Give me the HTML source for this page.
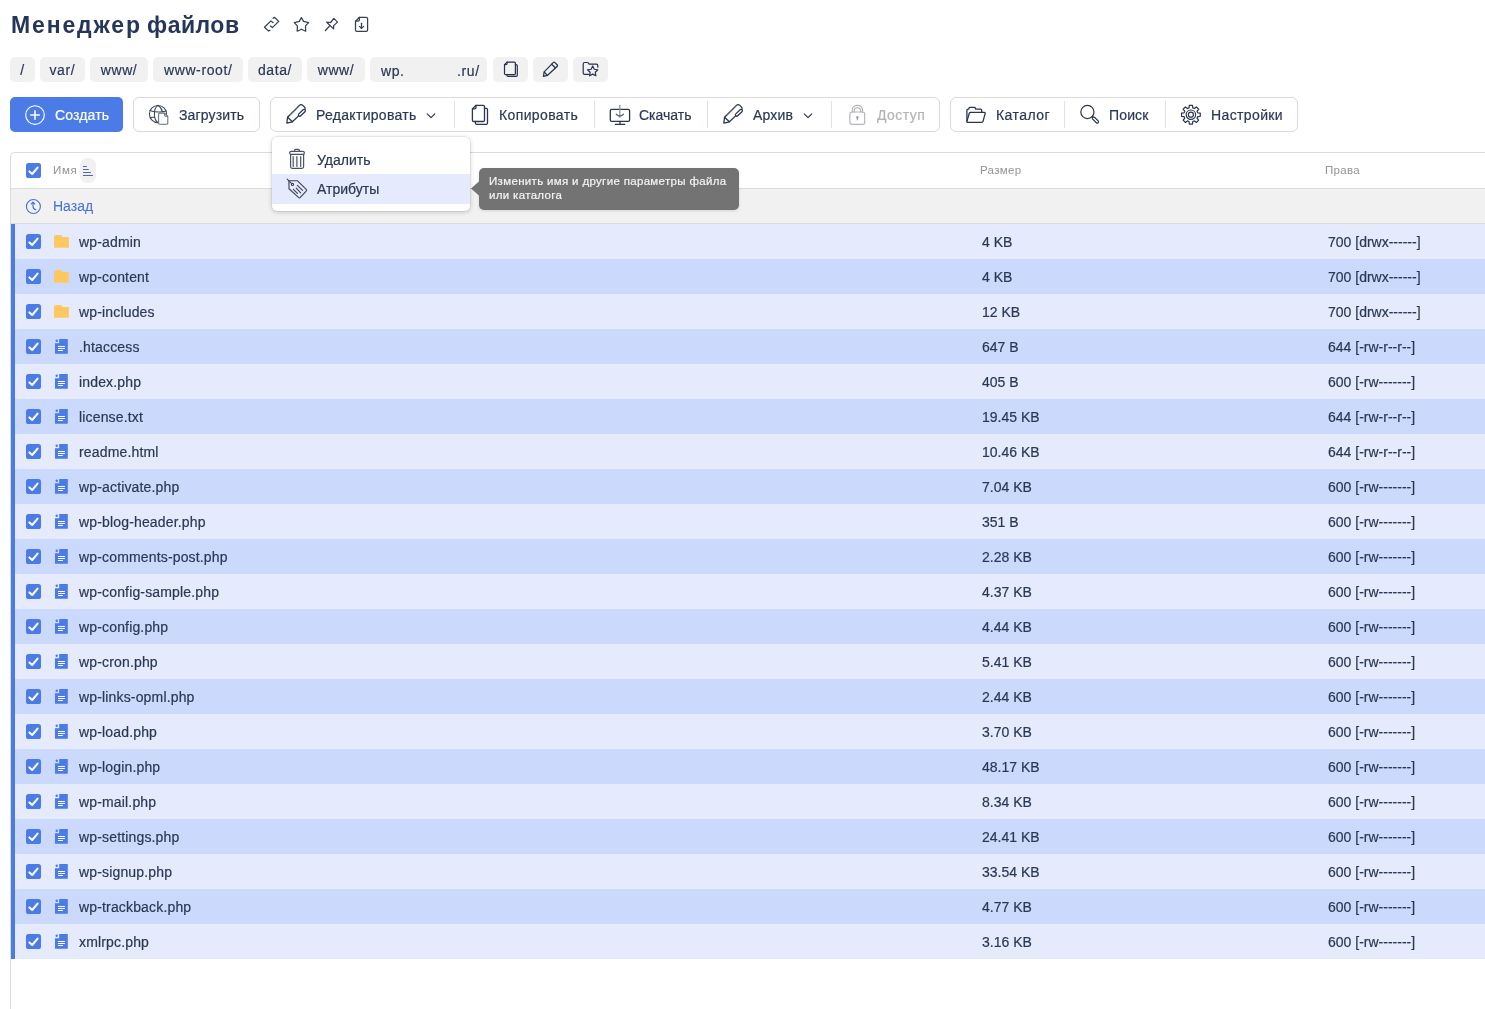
<!DOCTYPE html>
<html lang="ru"><head><meta charset="utf-8"><title>Менеджер файлов</title>
<style>
html,body{margin:0;padding:0;background:#fff;width:1485px;height:1009px;overflow:hidden;position:relative;font-family:"Liberation Sans",sans-serif;}
.t{position:absolute;white-space:nowrap;font-family:"Liberation Sans",sans-serif;will-change:transform;-webkit-text-stroke:0.2px currentColor;}
svg{overflow:visible}
</style></head><body>
<div class="t" style="left:10.7px;top:10.93px;font-size:23px;line-height:29px;color:#24365a;font-weight:700;letter-spacing:1.85px;-webkit-text-stroke:0">Менеджер</div>
<div class="t" style="left:147px;top:10.93px;font-size:23px;line-height:29px;color:#24365a;font-weight:700;letter-spacing:0.5px;-webkit-text-stroke:0">файлов</div>
<svg style="position:absolute;left:260px;top:12px;" width="24" height="24" viewBox="0 0 24 24" fill="none" stroke="#363f57" stroke-width="1.25" stroke-linecap="round" stroke-linejoin="round"><path d="M13 10.6 L10.9 8.9 L4.5 15.2 L8.6 19.1 L9.9 18.2"/><path d="M10.4 14 L12.4 15.6 L18.7 9.4 L14.4 5.3 L13.1 6.3"/></svg>
<svg style="position:absolute;left:290px;top:12px;" width="24" height="24" viewBox="0 0 24 24" fill="none" stroke="#363f57" stroke-width="1.25" stroke-linecap="round" stroke-linejoin="round"><path d="M11.4 5.6 L13.6 9.4 L18.6 10.6 L15.5 13.9 L15.7 19.2 L11.4 17.3 L7.2 19.2 L7.4 13.9 L4.3 10.6 L9.3 9.4 Z"/></svg>
<svg style="position:absolute;left:320px;top:12px;" width="24" height="24" viewBox="0 0 24 24" fill="none" stroke="#363f57" stroke-width="1.25" stroke-linecap="round" stroke-linejoin="round"><path d="M5.4 18.5 L9.6 14"/><path d="M6.7 10.2 L10.7 10.5 L13.8 6.4 L17.5 10.1 L13.7 13.6 L13.6 16.9 Z"/></svg>
<svg style="position:absolute;left:350px;top:12px;" width="24" height="24" viewBox="0 0 24 24" fill="none" stroke="#363f57" stroke-width="1.25" stroke-linecap="round" stroke-linejoin="round"><path d="M9.4 5.3 H16.2 A1.4 1.4 0 0 1 17.6 6.7 V18 A1.4 1.4 0 0 1 16.2 19.4 H6.9 A1.4 1.4 0 0 1 5.5 18 V9.2 Z"/><path d="M5.6 9.2 H8 A1.4 1.4 0 0 0 9.4 7.8 V5.4"/><path d="M11.5 11.3 V16.4"/><path d="M9.5 14.4 L11.5 16.4 L13.6 14.4"/></svg>
<div style="position:absolute;left:10px;top:57px;width:24.5px;height:25px;background:#f1f1f1;border-radius:5px"></div>
<div class="t" style="left:10px;top:57.6px;width:24.5px;height:25px;line-height:25px;text-align:center;font-size:14px;letter-spacing:0.6px;text-indent:0.6px;color:#2a3856">/</div>
<div style="position:absolute;left:40.4px;top:57px;width:44.2px;height:25px;background:#f1f1f1;border-radius:5px"></div>
<div class="t" style="left:40.4px;top:57.6px;width:44.2px;height:25px;line-height:25px;text-align:center;font-size:14px;letter-spacing:0.6px;text-indent:0.6px;color:#2a3856">var/</div>
<div style="position:absolute;left:90px;top:57px;width:57.5px;height:25px;background:#f1f1f1;border-radius:5px"></div>
<div class="t" style="left:90px;top:57.6px;width:57.5px;height:25px;line-height:25px;text-align:center;font-size:14px;letter-spacing:0.6px;text-indent:0.6px;color:#2a3856">www/</div>
<div style="position:absolute;left:153.2px;top:57px;width:89.8px;height:25px;background:#f1f1f1;border-radius:5px"></div>
<div class="t" style="left:153.2px;top:57.6px;width:89.8px;height:25px;line-height:25px;text-align:center;font-size:14px;letter-spacing:0.6px;text-indent:0.6px;color:#2a3856">www-root/</div>
<div style="position:absolute;left:248px;top:57px;width:53.5px;height:25px;background:#f1f1f1;border-radius:5px"></div>
<div class="t" style="left:248px;top:57.6px;width:53.5px;height:25px;line-height:25px;text-align:center;font-size:14px;letter-spacing:0.6px;text-indent:0.6px;color:#2a3856">data/</div>
<div style="position:absolute;left:307.2px;top:57px;width:57.4px;height:25px;background:#f1f1f1;border-radius:5px"></div>
<div class="t" style="left:307.2px;top:57.6px;width:57.4px;height:25px;line-height:25px;text-align:center;font-size:14px;letter-spacing:0.6px;text-indent:0.6px;color:#2a3856">www/</div>
<div style="position:absolute;left:370.2px;top:57px;width:117.3px;height:25px;background:#f1f1f1;border-radius:5px"></div>
<div class="t" style="left:380.5px;top:60.55px;font-size:14px;line-height:20px;color:#2a3856;font-weight:400;letter-spacing:0.6px">wp.</div>
<div class="t" style="left:456.5px;top:60.55px;font-size:14px;line-height:20px;color:#2a3856;font-weight:400;letter-spacing:0.6px">.ru/</div>
<div style="position:absolute;left:493px;top:57px;width:34.6px;height:25px;background:#f1f1f1;border-radius:5px"></div>
<div style="position:absolute;left:533.4px;top:57px;width:34.6px;height:25px;background:#f1f1f1;border-radius:5px"></div>
<div style="position:absolute;left:573.3px;top:57px;width:34.6px;height:25px;background:#f1f1f1;border-radius:5px"></div>
<svg style="position:absolute;left:493px;top:55px;overflow:visible" width="117" height="29" viewBox="0 0 117 29" fill="none" stroke="#27314b" stroke-width="1.2" stroke-linecap="round" stroke-linejoin="round"><path transform="translate(0.5 0)" d="M13.6 7.1 H20.7 A1.2 1.2 0 0 1 21.9 8.3 V18.5 A1.2 1.2 0 0 1 20.7 19.7 H12.2 A1.2 1.2 0 0 1 11 18.5 V9.7 Z"/><path transform="translate(0.5 0)" d="M11.1 9.7 H12.4 A1.2 1.2 0 0 0 13.6 8.5 V7.2"/><path transform="translate(0.5 0)" d="M21.9 9.6 H22.6 A1.2 1.2 0 0 1 23.8 10.8 V20.2 A1.2 1.2 0 0 1 22.6 21.4 H14.6 A1.2 1.2 0 0 1 13.4 20.2 V19.8"/><path d="M51.2 16.8 L60.4 7.4 A0.9 0.9 0 0 1 61.7 7.4 L64.3 10 A0.9 0.9 0 0 1 64.3 11.3 L54.6 20.3 L50.4 21.4 Z"/><path d="M58.6 9.2 L62.6 13"/><path d="M51.2 17 L54.4 20.4"/><path d="M95.6 19.3 H91.6 A1.4 1.4 0 0 1 90.2 17.9 V8.9 A1.4 1.4 0 0 1 91.6 7.5 H94.4 A1 1 0 0 1 95.2 7.9 L96.2 9.2 H103.4 A1.4 1.4 0 0 1 104.8 10.6 V12.2"/><path d="M99.70 11.00 L101.29 14.22 L104.84 14.73 L102.27 17.23 L102.87 20.77 L99.70 19.10 L96.53 20.77 L97.13 17.23 L94.56 14.73 L98.11 14.22 Z"/></svg>
<div style="position:absolute;left:10px;top:97px;width:113px;height:35px;background:#4a7be6;border-radius:5px"></div>
<svg style="position:absolute;left:24px;top:104px;" width="22" height="22" viewBox="0 0 22 22" fill="none" stroke="#fff" stroke-width="1.15" stroke-linecap="round" stroke-linejoin="round"><circle cx="11" cy="11" r="9.3"/><path d="M11 6.2 V15.8 M6.2 11 H15.8" stroke-width="1.6" stroke-linecap="butt"/></svg>
<div class="t" style="left:55px;top:105.35px;font-size:14px;line-height:20px;color:#ffffff;font-weight:400;letter-spacing:0.15px">Создать</div>
<div style="position:absolute;left:133px;top:97px;width:125px;height:33px;border:1px solid #d9d9d9;border-radius:6px;background:#fff"></div>
<svg style="position:absolute;left:145px;top:102px;" width="28" height="28" viewBox="0 0 28 28" fill="none" stroke="#3a4358" stroke-width="1.05" stroke-linecap="round" stroke-linejoin="round"><circle cx="13" cy="12" r="8.6"/><path d="M13 3.4 C8.2 6.5 8.2 17.5 13 20.6"/><path d="M13 3.4 C15.6 5.2 17 7.2 17.3 9.6"/><path d="M4.8 8.4 Q13 11.2 21.4 8.9"/><path d="M5.4 15.6 Q7.5 15.2 9.6 15.3"/><path d="M14.8 11.1 H19.6 L22.8 14.3 V21 A1.2 1.2 0 0 1 21.6 22.2 H14.8 A1.2 1.2 0 0 1 13.6 21 V12.3 A1.2 1.2 0 0 1 14.8 11.1 Z" fill="#fff" stroke="#666e80"/><path d="M19.6 11.2 V13 A1.2 1.2 0 0 0 20.8 14.2 H22.7" stroke="#666e80"/></svg>
<div class="t" style="left:179px;top:105.35px;font-size:14px;line-height:20px;color:#2a3856;font-weight:400;letter-spacing:0.15px">Загрузить</div>
<div style="position:absolute;left:270px;top:97px;width:668px;height:33px;border:1px solid #d9d9d9;border-radius:6px;background:#fff"></div>
<div style="position:absolute;left:454px;top:101px;width:1px;height:27px;background:#e2e2e2"></div>
<div style="position:absolute;left:594px;top:101px;width:1px;height:27px;background:#e2e2e2"></div>
<div style="position:absolute;left:707px;top:101px;width:1px;height:27px;background:#e2e2e2"></div>
<div style="position:absolute;left:831px;top:101px;width:1px;height:27px;background:#e2e2e2"></div>
<svg style="position:absolute;left:282px;top:100px;" width="28" height="28" viewBox="0 0 28 28" fill="none" stroke="#2b3550" stroke-width="1.25" stroke-linecap="round" stroke-linejoin="round"><path d="M5.6 17.2 L17.4 5.4 A2.4 2.4 0 0 1 20.8 5.4 L22.4 7 A2.4 2.4 0 0 1 22.4 10.4 L10.4 21.8 L4.8 23.2 Z"/><path d="M5.6 17.2 L10.4 21.8"/><path d="M8 15.6 L17.6 6.2" stroke="#9aa0ae" stroke-width="0.9" stroke-dasharray="0.9 0.9"/><rect x="-4.3" y="-1.35" width="8.6" height="2.7" rx="1.35" transform="translate(19.9 12.8) rotate(-44)" fill="#fff"/></svg>
<div class="t" style="left:316px;top:105.35px;font-size:14px;line-height:20px;color:#2a3856;font-weight:400;letter-spacing:0.3px">Редактировать</div>
<svg style="position:absolute;left:425px;top:111px;" width="12" height="10" viewBox="0 0 12 10" fill="none" stroke="#2b3550" stroke-width="1.2" stroke-linecap="round" stroke-linejoin="round"><path d="M2.2 2.8 L6 6.6 L9.8 2.8"/></svg>
<svg style="position:absolute;left:466px;top:100px;" width="28" height="28" viewBox="0 0 28 28" fill="none" stroke="#2b3550" stroke-width="1.3" stroke-linecap="round" stroke-linejoin="round"><path d="M10 5.3 H17.2 A1.3 1.3 0 0 1 18.5 6.6 V20.2 A1.3 1.3 0 0 1 17.2 21.5 H7.7 A1.3 1.3 0 0 1 6.4 20.2 V8.9 Z"/><path d="M6.5 8.9 H8.7 A1.3 1.3 0 0 0 10 7.6 V5.4"/><path d="M18.5 8.3 H20.2 A1.3 1.3 0 0 1 21.5 9.6 V23.1 A1.3 1.3 0 0 1 20.2 24.4 H10.7 A1.3 1.3 0 0 1 9.4 23.1 V21.5"/></svg>
<div class="t" style="left:499.4px;top:105.35px;font-size:14px;line-height:20px;color:#2a3856;font-weight:400;letter-spacing:0.37px">Копировать</div>
<svg style="position:absolute;left:606px;top:100px;" width="28" height="28" viewBox="0 0 28 28" fill="none" stroke="#2b3550" stroke-width="1.3" stroke-linecap="round" stroke-linejoin="round"><rect x="4.3" y="9.3" width="19.3" height="12.1" rx="1.4"/><path d="M14 21.5 V24.3"/><path d="M9.4 24.4 H18.7"/><path d="M13.8 5.3 V17.2" stroke="#8d93a3"/><path d="M10.3 14.3 Q13.8 17.8 17.4 14.3" stroke="#5c6478"/></svg>
<div class="t" style="left:639.3px;top:105.35px;font-size:14px;line-height:20px;color:#2a3856;font-weight:400;letter-spacing:0px">Скачать</div>
<svg style="position:absolute;left:719px;top:100px;" width="28" height="28" viewBox="0 0 28 28" fill="none" stroke="#2b3550" stroke-width="1.25" stroke-linecap="round" stroke-linejoin="round"><path d="M5.6 17.2 L17.4 5.4 A2.4 2.4 0 0 1 20.8 5.4 L22.4 7 A2.4 2.4 0 0 1 22.4 10.4 L10.4 21.8 L4.8 23.2 Z"/><path d="M5.6 17.2 L10.4 21.8"/><path d="M8 15.6 L17.6 6.2" stroke="#9aa0ae" stroke-width="0.9" stroke-dasharray="0.9 0.9"/><rect x="-4.3" y="-1.35" width="8.6" height="2.7" rx="1.35" transform="translate(19.9 12.8) rotate(-44)" fill="#fff"/></svg>
<div class="t" style="left:753px;top:105.35px;font-size:14px;line-height:20px;color:#2a3856;font-weight:400;letter-spacing:0.15px">Архив</div>
<svg style="position:absolute;left:802px;top:111px;" width="12" height="10" viewBox="0 0 12 10" fill="none" stroke="#2b3550" stroke-width="1.2" stroke-linecap="round" stroke-linejoin="round"><path d="M2.2 2.8 L6 6.6 L9.8 2.8"/></svg>
<svg style="position:absolute;left:843px;top:100px;" width="28" height="28" viewBox="0 0 28 28" fill="none" stroke="#b3b3b9" stroke-width="1.15" stroke-linecap="round" stroke-linejoin="round"><rect x="6.9" y="12" width="14.8" height="12.4" rx="2.2"/><path d="M9.3 12 V9.8 A5.1 4.5 0 0 1 19.5 9.8 V12"/><path d="M11.2 12 V10.3 A3.2 2.6 0 0 1 17.6 10.3 V12"/><path d="M13.3 17.2 A1.1 1.1 0 0 1 15.5 17.2 L14.8 20.6 H14 Z" fill="#9c9ca4" stroke="none"/></svg>
<div class="t" style="left:876.8px;top:105.35px;font-size:14px;line-height:20px;color:#b4b4b4;font-weight:400;letter-spacing:0.45px">Доступ</div>
<div style="position:absolute;left:950px;top:97px;width:346px;height:33px;border:1px solid #d9d9d9;border-radius:6px;background:#fff"></div>
<div style="position:absolute;left:1064px;top:101px;width:1px;height:27px;background:#e2e2e2"></div>
<div style="position:absolute;left:1165px;top:101px;width:1px;height:27px;background:#e2e2e2"></div>
<svg style="position:absolute;left:962px;top:100px;" width="28" height="28" viewBox="0 0 28 28" fill="none" stroke="#2b3550" stroke-width="1.3" stroke-linecap="round" stroke-linejoin="round"><path d="M4.9 21 V10.4 A1.2 1.2 0 0 1 6.1 9.2 H6.6 L7.1 7.9 A0.8 0.8 0 0 1 7.9 7.4 H12.5 A0.8 0.8 0 0 1 13.3 7.9 L13.8 9.2 H18.4 A1.3 1.3 0 0 1 19.7 10.5 V12.4"/><path d="M4.9 21.4 L7.3 13.3 A1.4 1.4 0 0 1 8.6 12.4 H22.4 A0.8 0.8 0 0 1 23.2 13.4 L21 21.3 A1.4 1.4 0 0 1 19.7 22.3 H5.8 A0.9 0.9 0 0 1 4.9 21.4 Z"/></svg>
<div class="t" style="left:995.7px;top:105.35px;font-size:14px;line-height:20px;color:#2a3856;font-weight:400;letter-spacing:0.45px">Каталог</div>
<svg style="position:absolute;left:1076px;top:100px;" width="28" height="28" viewBox="0 0 28 28" fill="none" stroke="#2b3550" stroke-width="1.2" stroke-linecap="round" stroke-linejoin="round"><circle cx="11.4" cy="12" r="6.6"/><path d="M15.9 16.7 L16.9 17.6"/><rect x="-3.9" y="-1.3" width="7.8" height="2.6" rx="1.3" transform="translate(19.4 20) rotate(45)"/></svg>
<div class="t" style="left:1109px;top:105.35px;font-size:14px;line-height:20px;color:#2a3856;font-weight:400;letter-spacing:0.15px">Поиск</div>
<svg style="position:absolute;left:1177px;top:100px;" width="28" height="28" viewBox="0 0 28 28" fill="none" stroke="#2b3550" stroke-width="1.2" stroke-linecap="round" stroke-linejoin="round"><path d="M12.06 7.84 L12.25 5.34 L15.55 5.34 L15.74 7.84 L17.45 8.55 L19.35 6.92 L21.68 9.25 L20.05 11.15 L20.76 12.86 L23.26 13.05 L23.26 16.35 L20.76 16.54 L20.05 18.25 L21.68 20.15 L19.35 22.48 L17.45 20.85 L15.74 21.56 L15.55 24.06 L12.25 24.06 L12.06 21.56 L10.35 20.85 L8.45 22.48 L6.12 20.15 L7.75 18.25 L7.04 16.54 L4.54 16.35 L4.54 13.05 L7.04 12.86 L7.75 11.15 L6.12 9.25 L8.45 6.92 L10.35 8.55 Z"/><circle cx="13.9" cy="14.7" r="4.7"/><circle cx="13.9" cy="14.7" r="2.5"/></svg>
<div class="t" style="left:1210.5px;top:105.35px;font-size:14px;line-height:20px;color:#2a3856;font-weight:400;letter-spacing:0.38px">Настройки</div>
<div style="position:absolute;left:10px;top:152px;width:1490px;height:860px;border-left:1px solid #dcdcdc;border-top:1px solid #dcdcdc;border-top-left-radius:5px;background:#fff"></div>
<div style="position:absolute;left:11px;top:188px;width:1480px;height:1px;background:#dcdcdc"></div>
<div style="position:absolute;left:11px;top:189px;width:1480px;height:34px;background:#f1f1f1"></div>
<div style="position:absolute;left:11px;top:223px;width:1480px;height:1px;background:#dcdcdc"></div>
<svg style="position:absolute;left:26px;top:163px" width="15" height="15" viewBox="0 0 15 15"><rect x="0" y="0" width="15" height="15" rx="2.6" fill="#4a7be6"/><path d="M3.4 8.4 L6.2 11 L11.6 4.6" fill="none" stroke="#fff" stroke-width="2" stroke-linecap="round" stroke-linejoin="round"/></svg>
<div class="t" style="left:53.2px;top:162.37px;font-size:11.5px;line-height:17.5px;color:#969696;font-weight:400;letter-spacing:0.65px;-webkit-text-stroke:0.05px currentColor">Имя</div>
<div style="position:absolute;left:80.2px;top:158.3px;width:15.5px;height:24.8px;background:#f1f1f1;border-radius:7px"></div>
<svg style="position:absolute;left:80px;top:160px" width="16" height="20" viewBox="0 0 16 20" fill="none" stroke="#4d68ad" stroke-width="1.1"><path d="M3 6.5 H6.8 M3 9.5 H8.8 M3 12.5 H10.9 M3 15.5 H12.9"/></svg>
<div class="t" style="left:980.0px;top:162.27px;font-size:11.5px;line-height:17.5px;color:#969696;font-weight:400;letter-spacing:0.3px;-webkit-text-stroke:0.05px currentColor">Размер</div>
<div class="t" style="left:1325.3px;top:162.27px;font-size:11.5px;line-height:17.5px;color:#969696;font-weight:400;letter-spacing:0.3px;-webkit-text-stroke:0.05px currentColor">Права</div>
<svg style="position:absolute;left:25px;top:198px;" width="17" height="17" viewBox="0 0 17 17" fill="none" stroke="#4a72d6" stroke-width="1.15" stroke-linecap="round" stroke-linejoin="round"><circle cx="8.4" cy="8.5" r="7"/><path d="M8 4.3 V8 Q8 11.2 10.9 11.8"/><path d="M6.3 6 L8 4.1 L9.7 6"/></svg>
<div class="t" style="left:52.9px;top:196.45px;font-size:14px;line-height:20px;color:#4a74d8;font-weight:400;-webkit-text-stroke:0.1px currentColor">Назад</div>
<div style="position:absolute;left:11px;top:224px;width:1480px;height:35px;background:#e5eafd"></div>
<div style="position:absolute;left:11px;top:224px;width:4px;height:35px;background:#4a7be6"></div>
<svg style="position:absolute;left:26px;top:234px" width="15" height="15" viewBox="0 0 15 15"><rect x="0" y="0" width="15" height="15" rx="2.6" fill="#4a7be6"/><path d="M3.4 8.4 L6.2 11 L11.6 4.6" fill="none" stroke="#fff" stroke-width="2" stroke-linecap="round" stroke-linejoin="round"/></svg>
<svg style="position:absolute;left:54px;top:234px" width="15" height="14" viewBox="0 0 15 14"><path d="M0 12.8 V2.6 A0.8 0.8 0 0 1 0.8 1.8 H1 A1.4 1.4 0 0 1 2.2 1 H6.4 A1.6 1.6 0 0 1 8 2.4 L8.2 3 H14 A0.9 0.9 0 0 1 14.9 3.9 V12.9 A0.9 0.9 0 0 1 14 13.8 H0.9 A0.9 0.9 0 0 1 0 12.9 Z" fill="#fec860"/></svg>
<div class="t" style="left:79px;top:231.85px;font-size:14px;line-height:20px;color:#2a3856;font-weight:400;letter-spacing:0.16px">wp-admin</div>
<div class="t" style="left:981.6px;top:231.85px;font-size:14px;line-height:20px;color:#2a3856;font-weight:400;">4 KB</div>
<div class="t" style="left:1327.5px;top:231.85px;font-size:14px;line-height:20px;color:#2a3856;font-weight:400;">700 [drwx------]</div>
<div style="position:absolute;left:11px;top:259px;width:1480px;height:35px;background:#cbdafc"></div>
<div style="position:absolute;left:11px;top:259px;width:4px;height:35px;background:#4a7be6"></div>
<svg style="position:absolute;left:26px;top:269px" width="15" height="15" viewBox="0 0 15 15"><rect x="0" y="0" width="15" height="15" rx="2.6" fill="#4a7be6"/><path d="M3.4 8.4 L6.2 11 L11.6 4.6" fill="none" stroke="#fff" stroke-width="2" stroke-linecap="round" stroke-linejoin="round"/></svg>
<svg style="position:absolute;left:54px;top:269px" width="15" height="14" viewBox="0 0 15 14"><path d="M0 12.8 V2.6 A0.8 0.8 0 0 1 0.8 1.8 H1 A1.4 1.4 0 0 1 2.2 1 H6.4 A1.6 1.6 0 0 1 8 2.4 L8.2 3 H14 A0.9 0.9 0 0 1 14.9 3.9 V12.9 A0.9 0.9 0 0 1 14 13.8 H0.9 A0.9 0.9 0 0 1 0 12.9 Z" fill="#fec860"/></svg>
<div class="t" style="left:79px;top:266.85px;font-size:14px;line-height:20px;color:#2a3856;font-weight:400;letter-spacing:0.16px">wp-content</div>
<div class="t" style="left:981.6px;top:266.85px;font-size:14px;line-height:20px;color:#2a3856;font-weight:400;">4 KB</div>
<div class="t" style="left:1327.5px;top:266.85px;font-size:14px;line-height:20px;color:#2a3856;font-weight:400;">700 [drwx------]</div>
<div style="position:absolute;left:11px;top:294px;width:1480px;height:35px;background:#e5eafd"></div>
<div style="position:absolute;left:11px;top:294px;width:4px;height:35px;background:#4a7be6"></div>
<svg style="position:absolute;left:26px;top:304px" width="15" height="15" viewBox="0 0 15 15"><rect x="0" y="0" width="15" height="15" rx="2.6" fill="#4a7be6"/><path d="M3.4 8.4 L6.2 11 L11.6 4.6" fill="none" stroke="#fff" stroke-width="2" stroke-linecap="round" stroke-linejoin="round"/></svg>
<svg style="position:absolute;left:54px;top:304px" width="15" height="14" viewBox="0 0 15 14"><path d="M0 12.8 V2.6 A0.8 0.8 0 0 1 0.8 1.8 H1 A1.4 1.4 0 0 1 2.2 1 H6.4 A1.6 1.6 0 0 1 8 2.4 L8.2 3 H14 A0.9 0.9 0 0 1 14.9 3.9 V12.9 A0.9 0.9 0 0 1 14 13.8 H0.9 A0.9 0.9 0 0 1 0 12.9 Z" fill="#fec860"/></svg>
<div class="t" style="left:79px;top:301.85px;font-size:14px;line-height:20px;color:#2a3856;font-weight:400;letter-spacing:0.16px">wp-includes</div>
<div class="t" style="left:981.6px;top:301.85px;font-size:14px;line-height:20px;color:#2a3856;font-weight:400;">12 KB</div>
<div class="t" style="left:1327.5px;top:301.85px;font-size:14px;line-height:20px;color:#2a3856;font-weight:400;">700 [drwx------]</div>
<div style="position:absolute;left:11px;top:329px;width:1480px;height:35px;background:#cbdafc"></div>
<div style="position:absolute;left:11px;top:329px;width:4px;height:35px;background:#4a7be6"></div>
<svg style="position:absolute;left:26px;top:339px" width="15" height="15" viewBox="0 0 15 15"><rect x="0" y="0" width="15" height="15" rx="2.6" fill="#4a7be6"/><path d="M3.4 8.4 L6.2 11 L11.6 4.6" fill="none" stroke="#fff" stroke-width="2" stroke-linecap="round" stroke-linejoin="round"/></svg>
<svg style="position:absolute;left:55px;top:339px" width="13" height="15" viewBox="0 0 13 15"><path d="M4.2 0 H12.8 V14.2 A0.6 0.6 0 0 1 12.2 14.8 H0.6 A0.6 0.6 0 0 1 0 14.2 V4.3 H4.2 Z" fill="#4a7be6"/><circle cx="1.7" cy="1.8" r="1.2" fill="#4a7be6"/><path d="M3 7.5 H9.9 M3 9.5 H9.9 M3 11.5 H7.9" stroke="#fff" stroke-width="1"/></svg>
<div class="t" style="left:79px;top:336.85px;font-size:14px;line-height:20px;color:#2a3856;font-weight:400;letter-spacing:0.16px">.htaccess</div>
<div class="t" style="left:981.6px;top:336.85px;font-size:14px;line-height:20px;color:#2a3856;font-weight:400;">647 B</div>
<div class="t" style="left:1327.5px;top:336.85px;font-size:14px;line-height:20px;color:#2a3856;font-weight:400;">644 [-rw-r--r--]</div>
<div style="position:absolute;left:11px;top:364px;width:1480px;height:35px;background:#e5eafd"></div>
<div style="position:absolute;left:11px;top:364px;width:4px;height:35px;background:#4a7be6"></div>
<svg style="position:absolute;left:26px;top:374px" width="15" height="15" viewBox="0 0 15 15"><rect x="0" y="0" width="15" height="15" rx="2.6" fill="#4a7be6"/><path d="M3.4 8.4 L6.2 11 L11.6 4.6" fill="none" stroke="#fff" stroke-width="2" stroke-linecap="round" stroke-linejoin="round"/></svg>
<svg style="position:absolute;left:55px;top:374px" width="13" height="15" viewBox="0 0 13 15"><path d="M4.2 0 H12.8 V14.2 A0.6 0.6 0 0 1 12.2 14.8 H0.6 A0.6 0.6 0 0 1 0 14.2 V4.3 H4.2 Z" fill="#4a7be6"/><circle cx="1.7" cy="1.8" r="1.2" fill="#4a7be6"/><path d="M3 7.5 H9.9 M3 9.5 H9.9 M3 11.5 H7.9" stroke="#fff" stroke-width="1"/></svg>
<div class="t" style="left:79px;top:371.85px;font-size:14px;line-height:20px;color:#2a3856;font-weight:400;letter-spacing:0.16px">index.php</div>
<div class="t" style="left:981.6px;top:371.85px;font-size:14px;line-height:20px;color:#2a3856;font-weight:400;">405 B</div>
<div class="t" style="left:1327.5px;top:371.85px;font-size:14px;line-height:20px;color:#2a3856;font-weight:400;">600 [-rw-------]</div>
<div style="position:absolute;left:11px;top:399px;width:1480px;height:35px;background:#cbdafc"></div>
<div style="position:absolute;left:11px;top:399px;width:4px;height:35px;background:#4a7be6"></div>
<svg style="position:absolute;left:26px;top:409px" width="15" height="15" viewBox="0 0 15 15"><rect x="0" y="0" width="15" height="15" rx="2.6" fill="#4a7be6"/><path d="M3.4 8.4 L6.2 11 L11.6 4.6" fill="none" stroke="#fff" stroke-width="2" stroke-linecap="round" stroke-linejoin="round"/></svg>
<svg style="position:absolute;left:55px;top:409px" width="13" height="15" viewBox="0 0 13 15"><path d="M4.2 0 H12.8 V14.2 A0.6 0.6 0 0 1 12.2 14.8 H0.6 A0.6 0.6 0 0 1 0 14.2 V4.3 H4.2 Z" fill="#4a7be6"/><circle cx="1.7" cy="1.8" r="1.2" fill="#4a7be6"/><path d="M3 7.5 H9.9 M3 9.5 H9.9 M3 11.5 H7.9" stroke="#fff" stroke-width="1"/></svg>
<div class="t" style="left:79px;top:406.85px;font-size:14px;line-height:20px;color:#2a3856;font-weight:400;letter-spacing:0.16px">license.txt</div>
<div class="t" style="left:981.6px;top:406.85px;font-size:14px;line-height:20px;color:#2a3856;font-weight:400;">19.45 KB</div>
<div class="t" style="left:1327.5px;top:406.85px;font-size:14px;line-height:20px;color:#2a3856;font-weight:400;">644 [-rw-r--r--]</div>
<div style="position:absolute;left:11px;top:434px;width:1480px;height:35px;background:#e5eafd"></div>
<div style="position:absolute;left:11px;top:434px;width:4px;height:35px;background:#4a7be6"></div>
<svg style="position:absolute;left:26px;top:444px" width="15" height="15" viewBox="0 0 15 15"><rect x="0" y="0" width="15" height="15" rx="2.6" fill="#4a7be6"/><path d="M3.4 8.4 L6.2 11 L11.6 4.6" fill="none" stroke="#fff" stroke-width="2" stroke-linecap="round" stroke-linejoin="round"/></svg>
<svg style="position:absolute;left:55px;top:444px" width="13" height="15" viewBox="0 0 13 15"><path d="M4.2 0 H12.8 V14.2 A0.6 0.6 0 0 1 12.2 14.8 H0.6 A0.6 0.6 0 0 1 0 14.2 V4.3 H4.2 Z" fill="#4a7be6"/><circle cx="1.7" cy="1.8" r="1.2" fill="#4a7be6"/><path d="M3 7.5 H9.9 M3 9.5 H9.9 M3 11.5 H7.9" stroke="#fff" stroke-width="1"/></svg>
<div class="t" style="left:79px;top:441.85px;font-size:14px;line-height:20px;color:#2a3856;font-weight:400;letter-spacing:0.16px">readme.html</div>
<div class="t" style="left:981.6px;top:441.85px;font-size:14px;line-height:20px;color:#2a3856;font-weight:400;">10.46 KB</div>
<div class="t" style="left:1327.5px;top:441.85px;font-size:14px;line-height:20px;color:#2a3856;font-weight:400;">644 [-rw-r--r--]</div>
<div style="position:absolute;left:11px;top:469px;width:1480px;height:35px;background:#cbdafc"></div>
<div style="position:absolute;left:11px;top:469px;width:4px;height:35px;background:#4a7be6"></div>
<svg style="position:absolute;left:26px;top:479px" width="15" height="15" viewBox="0 0 15 15"><rect x="0" y="0" width="15" height="15" rx="2.6" fill="#4a7be6"/><path d="M3.4 8.4 L6.2 11 L11.6 4.6" fill="none" stroke="#fff" stroke-width="2" stroke-linecap="round" stroke-linejoin="round"/></svg>
<svg style="position:absolute;left:55px;top:479px" width="13" height="15" viewBox="0 0 13 15"><path d="M4.2 0 H12.8 V14.2 A0.6 0.6 0 0 1 12.2 14.8 H0.6 A0.6 0.6 0 0 1 0 14.2 V4.3 H4.2 Z" fill="#4a7be6"/><circle cx="1.7" cy="1.8" r="1.2" fill="#4a7be6"/><path d="M3 7.5 H9.9 M3 9.5 H9.9 M3 11.5 H7.9" stroke="#fff" stroke-width="1"/></svg>
<div class="t" style="left:79px;top:476.85px;font-size:14px;line-height:20px;color:#2a3856;font-weight:400;letter-spacing:0.16px">wp-activate.php</div>
<div class="t" style="left:981.6px;top:476.85px;font-size:14px;line-height:20px;color:#2a3856;font-weight:400;">7.04 KB</div>
<div class="t" style="left:1327.5px;top:476.85px;font-size:14px;line-height:20px;color:#2a3856;font-weight:400;">600 [-rw-------]</div>
<div style="position:absolute;left:11px;top:504px;width:1480px;height:35px;background:#e5eafd"></div>
<div style="position:absolute;left:11px;top:504px;width:4px;height:35px;background:#4a7be6"></div>
<svg style="position:absolute;left:26px;top:514px" width="15" height="15" viewBox="0 0 15 15"><rect x="0" y="0" width="15" height="15" rx="2.6" fill="#4a7be6"/><path d="M3.4 8.4 L6.2 11 L11.6 4.6" fill="none" stroke="#fff" stroke-width="2" stroke-linecap="round" stroke-linejoin="round"/></svg>
<svg style="position:absolute;left:55px;top:514px" width="13" height="15" viewBox="0 0 13 15"><path d="M4.2 0 H12.8 V14.2 A0.6 0.6 0 0 1 12.2 14.8 H0.6 A0.6 0.6 0 0 1 0 14.2 V4.3 H4.2 Z" fill="#4a7be6"/><circle cx="1.7" cy="1.8" r="1.2" fill="#4a7be6"/><path d="M3 7.5 H9.9 M3 9.5 H9.9 M3 11.5 H7.9" stroke="#fff" stroke-width="1"/></svg>
<div class="t" style="left:79px;top:511.85px;font-size:14px;line-height:20px;color:#2a3856;font-weight:400;letter-spacing:0.16px">wp-blog-header.php</div>
<div class="t" style="left:981.6px;top:511.85px;font-size:14px;line-height:20px;color:#2a3856;font-weight:400;">351 B</div>
<div class="t" style="left:1327.5px;top:511.85px;font-size:14px;line-height:20px;color:#2a3856;font-weight:400;">600 [-rw-------]</div>
<div style="position:absolute;left:11px;top:539px;width:1480px;height:35px;background:#cbdafc"></div>
<div style="position:absolute;left:11px;top:539px;width:4px;height:35px;background:#4a7be6"></div>
<svg style="position:absolute;left:26px;top:549px" width="15" height="15" viewBox="0 0 15 15"><rect x="0" y="0" width="15" height="15" rx="2.6" fill="#4a7be6"/><path d="M3.4 8.4 L6.2 11 L11.6 4.6" fill="none" stroke="#fff" stroke-width="2" stroke-linecap="round" stroke-linejoin="round"/></svg>
<svg style="position:absolute;left:55px;top:549px" width="13" height="15" viewBox="0 0 13 15"><path d="M4.2 0 H12.8 V14.2 A0.6 0.6 0 0 1 12.2 14.8 H0.6 A0.6 0.6 0 0 1 0 14.2 V4.3 H4.2 Z" fill="#4a7be6"/><circle cx="1.7" cy="1.8" r="1.2" fill="#4a7be6"/><path d="M3 7.5 H9.9 M3 9.5 H9.9 M3 11.5 H7.9" stroke="#fff" stroke-width="1"/></svg>
<div class="t" style="left:79px;top:546.85px;font-size:14px;line-height:20px;color:#2a3856;font-weight:400;letter-spacing:0.16px">wp-comments-post.php</div>
<div class="t" style="left:981.6px;top:546.85px;font-size:14px;line-height:20px;color:#2a3856;font-weight:400;">2.28 KB</div>
<div class="t" style="left:1327.5px;top:546.85px;font-size:14px;line-height:20px;color:#2a3856;font-weight:400;">600 [-rw-------]</div>
<div style="position:absolute;left:11px;top:574px;width:1480px;height:35px;background:#e5eafd"></div>
<div style="position:absolute;left:11px;top:574px;width:4px;height:35px;background:#4a7be6"></div>
<svg style="position:absolute;left:26px;top:584px" width="15" height="15" viewBox="0 0 15 15"><rect x="0" y="0" width="15" height="15" rx="2.6" fill="#4a7be6"/><path d="M3.4 8.4 L6.2 11 L11.6 4.6" fill="none" stroke="#fff" stroke-width="2" stroke-linecap="round" stroke-linejoin="round"/></svg>
<svg style="position:absolute;left:55px;top:584px" width="13" height="15" viewBox="0 0 13 15"><path d="M4.2 0 H12.8 V14.2 A0.6 0.6 0 0 1 12.2 14.8 H0.6 A0.6 0.6 0 0 1 0 14.2 V4.3 H4.2 Z" fill="#4a7be6"/><circle cx="1.7" cy="1.8" r="1.2" fill="#4a7be6"/><path d="M3 7.5 H9.9 M3 9.5 H9.9 M3 11.5 H7.9" stroke="#fff" stroke-width="1"/></svg>
<div class="t" style="left:79px;top:581.85px;font-size:14px;line-height:20px;color:#2a3856;font-weight:400;letter-spacing:0.16px">wp-config-sample.php</div>
<div class="t" style="left:981.6px;top:581.85px;font-size:14px;line-height:20px;color:#2a3856;font-weight:400;">4.37 KB</div>
<div class="t" style="left:1327.5px;top:581.85px;font-size:14px;line-height:20px;color:#2a3856;font-weight:400;">600 [-rw-------]</div>
<div style="position:absolute;left:11px;top:609px;width:1480px;height:35px;background:#cbdafc"></div>
<div style="position:absolute;left:11px;top:609px;width:4px;height:35px;background:#4a7be6"></div>
<svg style="position:absolute;left:26px;top:619px" width="15" height="15" viewBox="0 0 15 15"><rect x="0" y="0" width="15" height="15" rx="2.6" fill="#4a7be6"/><path d="M3.4 8.4 L6.2 11 L11.6 4.6" fill="none" stroke="#fff" stroke-width="2" stroke-linecap="round" stroke-linejoin="round"/></svg>
<svg style="position:absolute;left:55px;top:619px" width="13" height="15" viewBox="0 0 13 15"><path d="M4.2 0 H12.8 V14.2 A0.6 0.6 0 0 1 12.2 14.8 H0.6 A0.6 0.6 0 0 1 0 14.2 V4.3 H4.2 Z" fill="#4a7be6"/><circle cx="1.7" cy="1.8" r="1.2" fill="#4a7be6"/><path d="M3 7.5 H9.9 M3 9.5 H9.9 M3 11.5 H7.9" stroke="#fff" stroke-width="1"/></svg>
<div class="t" style="left:79px;top:616.85px;font-size:14px;line-height:20px;color:#2a3856;font-weight:400;letter-spacing:0.16px">wp-config.php</div>
<div class="t" style="left:981.6px;top:616.85px;font-size:14px;line-height:20px;color:#2a3856;font-weight:400;">4.44 KB</div>
<div class="t" style="left:1327.5px;top:616.85px;font-size:14px;line-height:20px;color:#2a3856;font-weight:400;">600 [-rw-------]</div>
<div style="position:absolute;left:11px;top:644px;width:1480px;height:35px;background:#e5eafd"></div>
<div style="position:absolute;left:11px;top:644px;width:4px;height:35px;background:#4a7be6"></div>
<svg style="position:absolute;left:26px;top:654px" width="15" height="15" viewBox="0 0 15 15"><rect x="0" y="0" width="15" height="15" rx="2.6" fill="#4a7be6"/><path d="M3.4 8.4 L6.2 11 L11.6 4.6" fill="none" stroke="#fff" stroke-width="2" stroke-linecap="round" stroke-linejoin="round"/></svg>
<svg style="position:absolute;left:55px;top:654px" width="13" height="15" viewBox="0 0 13 15"><path d="M4.2 0 H12.8 V14.2 A0.6 0.6 0 0 1 12.2 14.8 H0.6 A0.6 0.6 0 0 1 0 14.2 V4.3 H4.2 Z" fill="#4a7be6"/><circle cx="1.7" cy="1.8" r="1.2" fill="#4a7be6"/><path d="M3 7.5 H9.9 M3 9.5 H9.9 M3 11.5 H7.9" stroke="#fff" stroke-width="1"/></svg>
<div class="t" style="left:79px;top:651.85px;font-size:14px;line-height:20px;color:#2a3856;font-weight:400;letter-spacing:0.16px">wp-cron.php</div>
<div class="t" style="left:981.6px;top:651.85px;font-size:14px;line-height:20px;color:#2a3856;font-weight:400;">5.41 KB</div>
<div class="t" style="left:1327.5px;top:651.85px;font-size:14px;line-height:20px;color:#2a3856;font-weight:400;">600 [-rw-------]</div>
<div style="position:absolute;left:11px;top:679px;width:1480px;height:35px;background:#cbdafc"></div>
<div style="position:absolute;left:11px;top:679px;width:4px;height:35px;background:#4a7be6"></div>
<svg style="position:absolute;left:26px;top:689px" width="15" height="15" viewBox="0 0 15 15"><rect x="0" y="0" width="15" height="15" rx="2.6" fill="#4a7be6"/><path d="M3.4 8.4 L6.2 11 L11.6 4.6" fill="none" stroke="#fff" stroke-width="2" stroke-linecap="round" stroke-linejoin="round"/></svg>
<svg style="position:absolute;left:55px;top:689px" width="13" height="15" viewBox="0 0 13 15"><path d="M4.2 0 H12.8 V14.2 A0.6 0.6 0 0 1 12.2 14.8 H0.6 A0.6 0.6 0 0 1 0 14.2 V4.3 H4.2 Z" fill="#4a7be6"/><circle cx="1.7" cy="1.8" r="1.2" fill="#4a7be6"/><path d="M3 7.5 H9.9 M3 9.5 H9.9 M3 11.5 H7.9" stroke="#fff" stroke-width="1"/></svg>
<div class="t" style="left:79px;top:686.85px;font-size:14px;line-height:20px;color:#2a3856;font-weight:400;letter-spacing:0.16px">wp-links-opml.php</div>
<div class="t" style="left:981.6px;top:686.85px;font-size:14px;line-height:20px;color:#2a3856;font-weight:400;">2.44 KB</div>
<div class="t" style="left:1327.5px;top:686.85px;font-size:14px;line-height:20px;color:#2a3856;font-weight:400;">600 [-rw-------]</div>
<div style="position:absolute;left:11px;top:714px;width:1480px;height:35px;background:#e5eafd"></div>
<div style="position:absolute;left:11px;top:714px;width:4px;height:35px;background:#4a7be6"></div>
<svg style="position:absolute;left:26px;top:724px" width="15" height="15" viewBox="0 0 15 15"><rect x="0" y="0" width="15" height="15" rx="2.6" fill="#4a7be6"/><path d="M3.4 8.4 L6.2 11 L11.6 4.6" fill="none" stroke="#fff" stroke-width="2" stroke-linecap="round" stroke-linejoin="round"/></svg>
<svg style="position:absolute;left:55px;top:724px" width="13" height="15" viewBox="0 0 13 15"><path d="M4.2 0 H12.8 V14.2 A0.6 0.6 0 0 1 12.2 14.8 H0.6 A0.6 0.6 0 0 1 0 14.2 V4.3 H4.2 Z" fill="#4a7be6"/><circle cx="1.7" cy="1.8" r="1.2" fill="#4a7be6"/><path d="M3 7.5 H9.9 M3 9.5 H9.9 M3 11.5 H7.9" stroke="#fff" stroke-width="1"/></svg>
<div class="t" style="left:79px;top:721.85px;font-size:14px;line-height:20px;color:#2a3856;font-weight:400;letter-spacing:0.16px">wp-load.php</div>
<div class="t" style="left:981.6px;top:721.85px;font-size:14px;line-height:20px;color:#2a3856;font-weight:400;">3.70 KB</div>
<div class="t" style="left:1327.5px;top:721.85px;font-size:14px;line-height:20px;color:#2a3856;font-weight:400;">600 [-rw-------]</div>
<div style="position:absolute;left:11px;top:749px;width:1480px;height:35px;background:#cbdafc"></div>
<div style="position:absolute;left:11px;top:749px;width:4px;height:35px;background:#4a7be6"></div>
<svg style="position:absolute;left:26px;top:759px" width="15" height="15" viewBox="0 0 15 15"><rect x="0" y="0" width="15" height="15" rx="2.6" fill="#4a7be6"/><path d="M3.4 8.4 L6.2 11 L11.6 4.6" fill="none" stroke="#fff" stroke-width="2" stroke-linecap="round" stroke-linejoin="round"/></svg>
<svg style="position:absolute;left:55px;top:759px" width="13" height="15" viewBox="0 0 13 15"><path d="M4.2 0 H12.8 V14.2 A0.6 0.6 0 0 1 12.2 14.8 H0.6 A0.6 0.6 0 0 1 0 14.2 V4.3 H4.2 Z" fill="#4a7be6"/><circle cx="1.7" cy="1.8" r="1.2" fill="#4a7be6"/><path d="M3 7.5 H9.9 M3 9.5 H9.9 M3 11.5 H7.9" stroke="#fff" stroke-width="1"/></svg>
<div class="t" style="left:79px;top:756.85px;font-size:14px;line-height:20px;color:#2a3856;font-weight:400;letter-spacing:0.16px">wp-login.php</div>
<div class="t" style="left:981.6px;top:756.85px;font-size:14px;line-height:20px;color:#2a3856;font-weight:400;">48.17 KB</div>
<div class="t" style="left:1327.5px;top:756.85px;font-size:14px;line-height:20px;color:#2a3856;font-weight:400;">600 [-rw-------]</div>
<div style="position:absolute;left:11px;top:784px;width:1480px;height:35px;background:#e5eafd"></div>
<div style="position:absolute;left:11px;top:784px;width:4px;height:35px;background:#4a7be6"></div>
<svg style="position:absolute;left:26px;top:794px" width="15" height="15" viewBox="0 0 15 15"><rect x="0" y="0" width="15" height="15" rx="2.6" fill="#4a7be6"/><path d="M3.4 8.4 L6.2 11 L11.6 4.6" fill="none" stroke="#fff" stroke-width="2" stroke-linecap="round" stroke-linejoin="round"/></svg>
<svg style="position:absolute;left:55px;top:794px" width="13" height="15" viewBox="0 0 13 15"><path d="M4.2 0 H12.8 V14.2 A0.6 0.6 0 0 1 12.2 14.8 H0.6 A0.6 0.6 0 0 1 0 14.2 V4.3 H4.2 Z" fill="#4a7be6"/><circle cx="1.7" cy="1.8" r="1.2" fill="#4a7be6"/><path d="M3 7.5 H9.9 M3 9.5 H9.9 M3 11.5 H7.9" stroke="#fff" stroke-width="1"/></svg>
<div class="t" style="left:79px;top:791.85px;font-size:14px;line-height:20px;color:#2a3856;font-weight:400;letter-spacing:0.16px">wp-mail.php</div>
<div class="t" style="left:981.6px;top:791.85px;font-size:14px;line-height:20px;color:#2a3856;font-weight:400;">8.34 KB</div>
<div class="t" style="left:1327.5px;top:791.85px;font-size:14px;line-height:20px;color:#2a3856;font-weight:400;">600 [-rw-------]</div>
<div style="position:absolute;left:11px;top:819px;width:1480px;height:35px;background:#cbdafc"></div>
<div style="position:absolute;left:11px;top:819px;width:4px;height:35px;background:#4a7be6"></div>
<svg style="position:absolute;left:26px;top:829px" width="15" height="15" viewBox="0 0 15 15"><rect x="0" y="0" width="15" height="15" rx="2.6" fill="#4a7be6"/><path d="M3.4 8.4 L6.2 11 L11.6 4.6" fill="none" stroke="#fff" stroke-width="2" stroke-linecap="round" stroke-linejoin="round"/></svg>
<svg style="position:absolute;left:55px;top:829px" width="13" height="15" viewBox="0 0 13 15"><path d="M4.2 0 H12.8 V14.2 A0.6 0.6 0 0 1 12.2 14.8 H0.6 A0.6 0.6 0 0 1 0 14.2 V4.3 H4.2 Z" fill="#4a7be6"/><circle cx="1.7" cy="1.8" r="1.2" fill="#4a7be6"/><path d="M3 7.5 H9.9 M3 9.5 H9.9 M3 11.5 H7.9" stroke="#fff" stroke-width="1"/></svg>
<div class="t" style="left:79px;top:826.85px;font-size:14px;line-height:20px;color:#2a3856;font-weight:400;letter-spacing:0.16px">wp-settings.php</div>
<div class="t" style="left:981.6px;top:826.85px;font-size:14px;line-height:20px;color:#2a3856;font-weight:400;">24.41 KB</div>
<div class="t" style="left:1327.5px;top:826.85px;font-size:14px;line-height:20px;color:#2a3856;font-weight:400;">600 [-rw-------]</div>
<div style="position:absolute;left:11px;top:854px;width:1480px;height:35px;background:#e5eafd"></div>
<div style="position:absolute;left:11px;top:854px;width:4px;height:35px;background:#4a7be6"></div>
<svg style="position:absolute;left:26px;top:864px" width="15" height="15" viewBox="0 0 15 15"><rect x="0" y="0" width="15" height="15" rx="2.6" fill="#4a7be6"/><path d="M3.4 8.4 L6.2 11 L11.6 4.6" fill="none" stroke="#fff" stroke-width="2" stroke-linecap="round" stroke-linejoin="round"/></svg>
<svg style="position:absolute;left:55px;top:864px" width="13" height="15" viewBox="0 0 13 15"><path d="M4.2 0 H12.8 V14.2 A0.6 0.6 0 0 1 12.2 14.8 H0.6 A0.6 0.6 0 0 1 0 14.2 V4.3 H4.2 Z" fill="#4a7be6"/><circle cx="1.7" cy="1.8" r="1.2" fill="#4a7be6"/><path d="M3 7.5 H9.9 M3 9.5 H9.9 M3 11.5 H7.9" stroke="#fff" stroke-width="1"/></svg>
<div class="t" style="left:79px;top:861.85px;font-size:14px;line-height:20px;color:#2a3856;font-weight:400;letter-spacing:0.16px">wp-signup.php</div>
<div class="t" style="left:981.6px;top:861.85px;font-size:14px;line-height:20px;color:#2a3856;font-weight:400;">33.54 KB</div>
<div class="t" style="left:1327.5px;top:861.85px;font-size:14px;line-height:20px;color:#2a3856;font-weight:400;">600 [-rw-------]</div>
<div style="position:absolute;left:11px;top:889px;width:1480px;height:35px;background:#cbdafc"></div>
<div style="position:absolute;left:11px;top:889px;width:4px;height:35px;background:#4a7be6"></div>
<svg style="position:absolute;left:26px;top:899px" width="15" height="15" viewBox="0 0 15 15"><rect x="0" y="0" width="15" height="15" rx="2.6" fill="#4a7be6"/><path d="M3.4 8.4 L6.2 11 L11.6 4.6" fill="none" stroke="#fff" stroke-width="2" stroke-linecap="round" stroke-linejoin="round"/></svg>
<svg style="position:absolute;left:55px;top:899px" width="13" height="15" viewBox="0 0 13 15"><path d="M4.2 0 H12.8 V14.2 A0.6 0.6 0 0 1 12.2 14.8 H0.6 A0.6 0.6 0 0 1 0 14.2 V4.3 H4.2 Z" fill="#4a7be6"/><circle cx="1.7" cy="1.8" r="1.2" fill="#4a7be6"/><path d="M3 7.5 H9.9 M3 9.5 H9.9 M3 11.5 H7.9" stroke="#fff" stroke-width="1"/></svg>
<div class="t" style="left:79px;top:896.85px;font-size:14px;line-height:20px;color:#2a3856;font-weight:400;letter-spacing:0.16px">wp-trackback.php</div>
<div class="t" style="left:981.6px;top:896.85px;font-size:14px;line-height:20px;color:#2a3856;font-weight:400;">4.77 KB</div>
<div class="t" style="left:1327.5px;top:896.85px;font-size:14px;line-height:20px;color:#2a3856;font-weight:400;">600 [-rw-------]</div>
<div style="position:absolute;left:11px;top:924px;width:1480px;height:35px;background:#e5eafd"></div>
<div style="position:absolute;left:11px;top:924px;width:4px;height:35px;background:#4a7be6"></div>
<svg style="position:absolute;left:26px;top:934px" width="15" height="15" viewBox="0 0 15 15"><rect x="0" y="0" width="15" height="15" rx="2.6" fill="#4a7be6"/><path d="M3.4 8.4 L6.2 11 L11.6 4.6" fill="none" stroke="#fff" stroke-width="2" stroke-linecap="round" stroke-linejoin="round"/></svg>
<svg style="position:absolute;left:55px;top:934px" width="13" height="15" viewBox="0 0 13 15"><path d="M4.2 0 H12.8 V14.2 A0.6 0.6 0 0 1 12.2 14.8 H0.6 A0.6 0.6 0 0 1 0 14.2 V4.3 H4.2 Z" fill="#4a7be6"/><circle cx="1.7" cy="1.8" r="1.2" fill="#4a7be6"/><path d="M3 7.5 H9.9 M3 9.5 H9.9 M3 11.5 H7.9" stroke="#fff" stroke-width="1"/></svg>
<div class="t" style="left:79px;top:931.85px;font-size:14px;line-height:20px;color:#2a3856;font-weight:400;letter-spacing:0.16px">xmlrpc.php</div>
<div class="t" style="left:981.6px;top:931.85px;font-size:14px;line-height:20px;color:#2a3856;font-weight:400;">3.16 KB</div>
<div class="t" style="left:1327.5px;top:931.85px;font-size:14px;line-height:20px;color:#2a3856;font-weight:400;">600 [-rw-------]</div>
<div style="position:absolute;left:271.5px;top:136.5px;width:198.7px;height:74.5px;background:#fff;border-radius:5px;box-shadow:0 0 0 0.5px rgba(0,0,0,0.08),0 1px 5px rgba(0,0,0,0.2)"></div>
<div style="position:absolute;left:271.5px;top:174px;width:198.7px;height:30px;background:#e5eafd"></div>
<svg style="position:absolute;left:284px;top:144px;" width="28" height="28" viewBox="0 0 28 28" fill="none" stroke="#4a5266" stroke-width="1.2" stroke-linecap="round" stroke-linejoin="round"><path d="M10.6 7.3 V6.4 A1.1 1.1 0 0 1 11.7 5.3 H14.3 A1.1 1.1 0 0 1 15.4 6.4 V7.3"/><path d="M7.2 7.4 H18.8 A1.6 1.5 0 0 1 18.8 10.4 H7.2 A1.6 1.5 0 0 1 7.2 7.4 Z"/><path d="M6.6 10.4 V22.6 A1.8 1.8 0 0 0 8.4 24.4 H17.8 A1.8 1.8 0 0 0 19.6 22.6 V10.4"/><path d="M9.2 12.6 V22.4 M12.9 12.6 V22.4 M16.7 12.6 V22.4"/></svg>
<div class="t" style="left:317.3px;top:149.55px;font-size:14px;line-height:20px;color:#2a3856;font-weight:400;">Удалить</div>
<svg style="position:absolute;left:283px;top:174px;" width="28" height="28" viewBox="0 0 28 28" fill="none" stroke="#3e465c" stroke-width="1.15" stroke-linecap="round" stroke-linejoin="round"><path d="M5.9 6.7 H14.3 L23.2 15.4 A1.3 1.3 0 0 1 23.2 17.2 L17.3 23.4 A1.3 1.3 0 0 1 15.5 23.4 L6 14.8 Z"/><circle cx="9.5" cy="10.4" r="1.1"/><path d="M4.2 5.2 L8.4 9.3"/><path d="M14.4 11.4 L19.6 16.4 M13.3 14.2 L17.6 18.9 M10.4 15.3 L14.4 19.4"/></svg>
<div class="t" style="left:317.3px;top:179.15px;font-size:14px;line-height:20px;color:#2a3856;font-weight:400;">Атрибуты</div>
<div style="position:absolute;left:479.2px;top:168px;width:259.8px;height:42px;background:#737373;border-radius:5px;box-shadow:0 1px 3px rgba(0,0,0,0.12)"></div>
<svg style="position:absolute;left:470px;top:180px" width="10" height="17" viewBox="0 0 10 17"><path d="M10 0.5 L1 8.5 L10 16.5 Z" fill="#737373"/></svg>
<div class="t" style="left:489.4px;top:173.27px;font-size:11.5px;line-height:17.5px;color:#f4f4f4;font-weight:400;letter-spacing:0.33px">Изменить имя и другие параметры файла</div>
<div class="t" style="left:489.4px;top:186.97px;font-size:11.5px;line-height:17.5px;color:#f4f4f4;font-weight:400;letter-spacing:0.33px">или каталога</div>
</body></html>
